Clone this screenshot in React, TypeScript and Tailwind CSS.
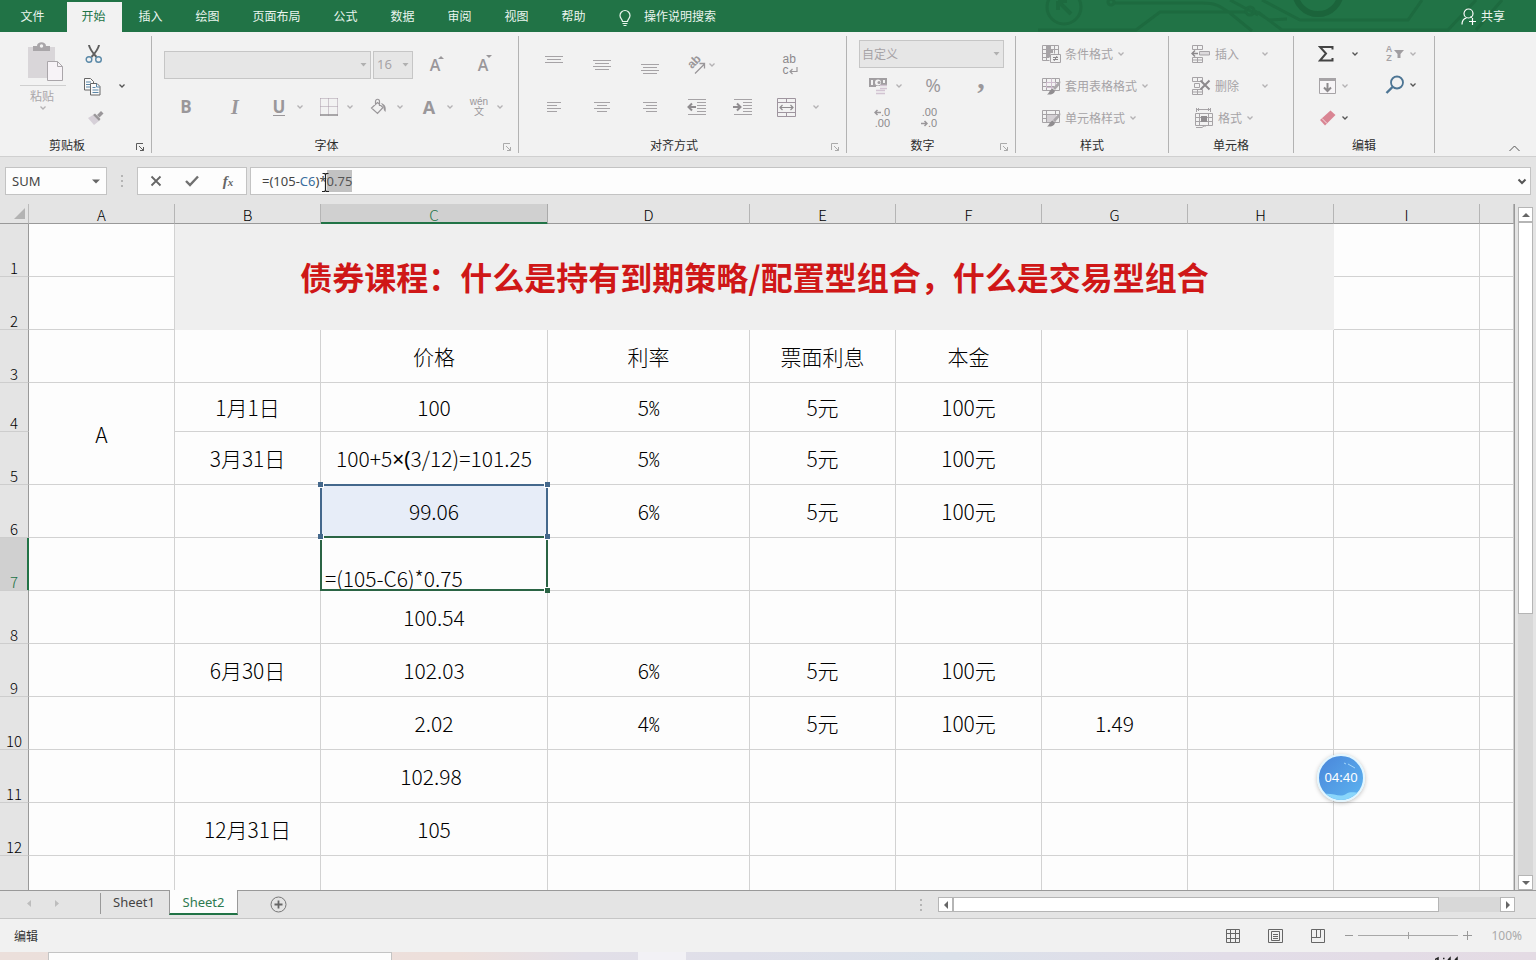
import React from "react";

const GRAY = "#a6a3a6";

/* ---------- small shared pieces ---------- */

function Svg({ w, h, children, className = "" }: { w: number; h: number; children: React.ReactNode; className?: string }) {
  return (
    <svg width={w} height={h} viewBox={`0 0 ${w} ${h}`} fill="none" className={`shrink-0 ${className}`} aria-hidden="true">
      {children}
    </svg>
  );
}

function Caret({ color = "#b4b2b4" }: { color?: string }) {
  return (
    <Svg w={8} h={6}>
      <path d="M1.5 1.5 4 4 6.5 1.5" stroke={color} strokeWidth="1.3" />
    </Svg>
  );
}

function IconButton({ label, className = "w-12", children }: { label: string; className?: string; children: React.ReactNode }) {
  return (
    <button type="button" aria-label={label} className={`flex h-7 shrink-0 items-center justify-center ${className}`}>
      {children}
    </button>
  );
}

function MenuButton({ label, color, className = "w-3" }: { label: string; color?: string; className?: string }) {
  return (
    <button type="button" aria-label={label} className={`flex h-7 shrink-0 items-center justify-center ${className}`}>
      <Caret color={color} />
    </button>
  );
}

function SplitButton({ label, children }: { label: string; children: React.ReactNode }) {
  return (
    <div className="flex w-[50px] shrink-0 items-center">
      <IconButton label={label} className="w-[30px]">
        {children}
      </IconButton>
      <MenuButton label={`${label}选项`} />
    </div>
  );
}

function Launcher({ label, dark }: { label: string; dark?: boolean }) {
  return (
    <button type="button" aria-label={label} className="mr-[5px] flex h-4 w-3 items-center justify-center self-end">
      <Svg w={10} h={10} className="mt-1">
        <path d="M1.5 8V1.5H8M4 4l4.5 4.5M8.5 5v3.5H5" stroke={dark ? "#5a5a5a" : "#aaa"} />
      </Svg>
    </button>
  );
}

function Group({ title, width, launcher, dark, children }: { title: string; width: string; launcher?: boolean; dark?: boolean; children: React.ReactNode }) {
  return (
    <section aria-label={title} className={`flex shrink-0 flex-col border-r border-[#b3b3b3] ${width}`}>
      <div className="flex-1">{children}</div>
      <div className="flex h-4 items-center">
        <h2 className="flex-1 text-center text-xs leading-4 text-[#2d2d2d]">{title}</h2>
        {launcher && <Launcher label={`${title}设置`} dark={dark} />}
      </div>
    </section>
  );
}

function Lines({ rows, w = 18, h = 18 }: { rows: [number, number, number][]; w?: number; h?: number }) {
  return (
    <Svg w={w} h={h}>
      {rows.map(([x1, x2, y], i) => (
        <path key={i} d={`M${x1} ${y + 0.5}H${x2}`} stroke={GRAY} />
      ))}
    </Svg>
  );
}

/* ---------- title tabs ---------- */

const tabs: [string, string][] = [
  ["插入", "w-[57px]"],
  ["绘图", "w-[57px]"],
  ["页面布局", "w-[81px]"],
  ["公式", "w-[57px]"],
  ["数据", "w-[57px]"],
  ["审阅", "w-[57px]"],
  ["视图", "w-[57px]"],
  ["帮助", "w-[57px]"],
];

function TabBar() {
  return (
    <header className="relative flex h-8 items-stretch overflow-hidden bg-[#217346] text-xs text-[#eaf5ee]">
      <svg className="absolute right-0 top-0" width="500" height="32" viewBox="0 0 500 32" fill="none" aria-hidden="true">
        <g stroke="#1d6a3f" strokeWidth="3">
          <circle cx="28" cy="7" r="17" />
          <path d="M22 1h9M22 1v9M22 1l13 13" strokeWidth="4" />
          <path d="M2 30h98l24-18h86M78 3h88c14 0 18 3 28 10l22 18M194 0l28 15M219 11l14 9h0l18-1M222 12l24 18M226 0l38 20h108l14-20M244 30h168l28-30M440 30l26-30" />
          <circle cx="214" cy="11" r="4" />
          <circle cx="75" cy="2" r="3" />
        </g>
        <circle cx="282" cy="-9" r="23" stroke="#1b643b" strokeWidth="6" />
      </svg>
      <nav aria-label="功能区" className="flex">
        <button type="button" className="w-[67px] pr-0.5">文件</button>
        <button type="button" aria-current="page" className="mt-0.5 w-[55px] bg-[#f2f2f2] pb-0.5 pr-0.5 text-[#217346]">开始</button>
        {tabs.map(([t, w]) => (
          <button type="button" key={t} className={w}>{t}</button>
        ))}
      </nav>
      <button type="button" className="ml-4 flex items-center gap-3">
        <Svg w={14} h={18} className="mt-1">
          <path d="M4.5 12.5c0-2-2.500-3-2.500-6a5 5 0 0 1 10 0c0 3-2.500 4-2.500 6zM4.500 14.500h5M5.500 16.500h3" stroke="#eaf5ee" strokeWidth="1.2" />
        </Svg>
        操作说明搜索
      </button>
      <button type="button" className="relative ml-auto mr-[31px] flex items-center gap-1">
        <Svg w={16} h={18} className="mt-0.5">
          <path d="M1 16.500c0-4 2-6 4.500-6.500M11 9.500c0 0-.5-.6-1.500-1" stroke="#fff" strokeWidth="1.2" />
          <circle cx="7.500" cy="5.500" r="4.500" stroke="#fff" strokeWidth="1.2" />
          <path d="M11.500 10v7M8 13.500h7" stroke="#fff" strokeWidth="1.2" />
        </Svg>
        共享
      </button>
    </header>
  );
}

/* ---------- ribbon ---------- */

function TableIcon({ kind }: { kind: "cond" | "table" | "style" }) {
  return (
    <Svg w={20} h={20}>
      {kind === "cond" ? (
        <>
          <path d="M1.500 1.500h16v9M1.500 1.500v15h7M1.500 5.500h16M1.500 9.500h8M1.500 13.500h7M5.500 1.500v15M13.500 1.500v8" stroke={GRAY} />
          <path d="M6 2h4v3H6zM6 6h6v3H6zM6 10h3v3H6z" fill={GRAY} />
          <path d="M9.500 10.500h10v8h-10z" fill="#f2f2f2" stroke={GRAY} />
          <path d="M12 13.500h5M12 15.500h5M16 12l-3 5" stroke="#8c898c" />
        </>
      ) : (
        <>
          <path d="M1.500 2.500h17v12h-17zM1.500 6.500h17M1.500 10.500h12M5.500 2.500v12M14.500 2.500v4" stroke={GRAY} />
          {kind === "table" ? <path d="M10.500 2.500v12M5.500 6.500h9v5h-9z" stroke="#cdbccd" /> : <path d="M6 7h9v7H6z" fill="#d4d0d4" />}
          <path d="M19 5c1 1 0 3-1 4.500l-4 4.500-2-2 4-4.500z" fill="#aaa7aa" />
          <path d="m11.500 12.500 2.500 2.500c-1 3-4 4-8 3.500 2-1 2-4 5.500-6z" fill="#908d90" />
        </>
      )}
    </Svg>
  );
}

function CellIcon({ kind }: { kind: "insert" | "delete" | "format" }) {
  if (kind === "format")
    return (
      <Svg w={20} h={20}>
        <path d="M2.500 0v4M16.500 0v4M3 1.500h13M5 0 3.500 1.500 5 3M14 0l1.500 1.500L14 3M1.500 5.500h17v12h-17zM1.500 9.500h17M1.500 13.500h17M5.500 5.500v12M14.500 5.500v12M2 19.500h6l2-1.500 2 0" stroke={GRAY} />
        <path d="M7 8h6v6H7z" fill="#908d90" />
      </Svg>
    );
  return (
    <Svg w={20} h={20}>
      <path d="M1.500 1.500h10v4h-10zM6.500 1.500v4M1.500 13.500h10v5h-10zM6.500 13.500v5M1.500 16h10" stroke={GRAY} />
      {kind === "insert" ? (
        <>
          <path d="M8.500 7.500h10v3.500h-10z" fill="#dcdadc" stroke={GRAY} />
          <path d="M1 9.500h6M4 6.500l-3 3 3 3" stroke="#8c898c" strokeWidth="1.500" />
        </>
      ) : (
        <>
          <path d="M3.500 7.500h5v4h-5z" stroke={GRAY} />
          <path d="m9.500 4.500 9 9M18.500 4.500l-9 9" stroke="#8c898c" strokeWidth="2" />
        </>
      )}
    </Svg>
  );
}

function Ribbon() {
  return (
    <div className="flex min-h-[125px] border-b border-[#d0d0d0] bg-[#f2f2f2] pb-[3px] pt-1 text-xs text-[#a6a3a6]">
      <Group title="剪贴板" width="w-[152px]" launcher dark>
        <div className="flex pt-1.5">
          <button type="button" className="ml-5 flex w-[46px] flex-col items-center self-start text-[#aaa7aa]">
            <Svg w={36} h={40} className="ml-1">
              <path d="M1 5h27v31H1z" fill="#d9d6d9" />
              <path d="M6 4h4c0-5 9-5 9 0h4v5H6z" fill="#a9a6a9" />
              <circle cx="14.500" cy="4" r="1.700" fill="#f2f2f2" />
              <path d="M20.500 19.500h10l5 5v14h-15z" fill="#f7f3f7" stroke="#aaa6aa" />
              <path d="M30.500 19.500v5h5" stroke="#aaa6aa" />
            </Svg>
            <span className="mt-[3px] w-full border-t border-[#cfcfcf] pr-0.5 leading-[19px]">粘贴</span>
            <Caret />
          </button>
          <div className="-mt-0.5 ml-2 flex flex-col">
            <IconButton label="剪切" className="mb-1 w-10">
              <Svg w={18} h={20}>
                <path d="M4 1c.5 4 3 7 7.500 12M14 1c-.5 4-3 7-7.500 12" stroke="#5f5f5f" strokeWidth="2" />
                <circle cx="4" cy="15.500" r="2.800" stroke="#5a89a8" strokeWidth="1.400" />
                <circle cx="13.500" cy="15.500" r="2.800" stroke="#5a89a8" strokeWidth="1.400" />
              </Svg>
            </IconButton>
            <div className="flex">
              <IconButton label="复制" className="mb-1 w-9">
                <Svg w={18} h={19}>
                  <path d="M1.500 1.500h6l3 3v8.500h-9z" fill="#fafafa" stroke="#666" />
                  <path d="M3 5h5M3 7.500h5M3 10h5" stroke="#5b87a8" />
                  <path d="M7.500 6.500h6.500l3 3v8.500H7.500z" fill="#fafafa" stroke="#666" />
                  <path d="M13.500 6.500v3.500H17M9.500 10.500h3M9.500 13h6M9.500 15.500h6" stroke="#5b87a8" />
                </Svg>
              </IconButton>
              <MenuButton label="复制选项" color="#555" className="ml-1.5 w-3" />
            </div>
            <IconButton label="格式刷" className="w-[42px]">
              <Svg w={18} h={16}>
                <path d="m2 8 5-3 6 6-5 4z" fill="#d6d0d8" />
                <path d="m7 5 2-1.500 5.500 5.500L13 11z" fill="#9a979a" />
                <path d="m11 5 4-4 2.500 2.500-4 4z" fill="#9a979a" />
              </Svg>
            </IconButton>
          </div>
        </div>
      </Group>

      <Group title="字体" width="w-[367px]" launcher>
        <div className="pt-2">
          <div className="flex h-[42px] items-center pl-3">
            <span className="relative w-[207px]">
              <select aria-label="字体名称" className="h-7 w-full appearance-none border border-[#c6c6c6] bg-[#e6e6e6] px-1">
                <option></option>
              </select>
              <Triangle />
            </span>
            <span className="relative ml-0.5 w-10">
              <select aria-label="字号" defaultValue="16" className="h-7 w-full appearance-none border border-[#c6c6c6] bg-[#e6e6e6] px-[3px] font-['Noto_Sans'] text-[13px]">
                <option>16</option>
              </select>
              <Triangle />
            </span>
            <IconButton label="增大字号">
              <span className="font-['Open_Sans'] text-base font-semibold text-[#9a979a]">A</span>
              <Svg w={6} h={4} className="-ml-0.5 mb-4"><path d="M0 4l3-3 3 3z" fill="#9a979a" /></Svg>
            </IconButton>
            <IconButton label="减小字号">
              <span className="font-['Open_Sans'] text-base font-semibold text-[#9a979a]">A</span>
              <Svg w={6} h={4} className="-ml-0.5 mb-4"><path d="M0 0l3 3 3-3z" fill="#9a979a" /></Svg>
            </IconButton>
          </div>
          <div className="flex h-[42px] items-center pl-2.5 font-['Open_Sans'] text-[17px] text-[#9a979a]">
            <IconButton label="加粗"><b>B</b></IconButton>
            <IconButton label="倾斜" className="w-[50px]"><b className="font-['Liberation_Serif'] text-xl italic">I</b></IconButton>
            <span className="w-1" />
            <SplitButton label="下划线"><b className="border-b border-[#9a979a] leading-4">U</b></SplitButton>
            <SplitButton label="边框">
              <Svg w={18} h={18}>
                <path d="M0.500 0.500h17M0.500 0.500v17M17.500 0.500v17M0.500 8.500h17M8.500 0.500v17" stroke="#a89ba8" strokeDasharray="1 1" />
                <path d="M0 17h18" stroke="#8f8c8f" strokeWidth="1.500" />
              </Svg>
            </SplitButton>
            <SplitButton label="填充颜色">
              <Svg w={18} h={18}>
                <path d="M7.500 4.500 13 9.500 7.500 15.500 1.500 10zM5.500 7V3.500c0-3 4-3 4 0V8" stroke="#9a979a" strokeWidth="1.200" />
                <path d="M11 5c4 1 5.500 4 4.500 9-1.500-1-2-3-2-5z" fill="#9a979a" />
              </Svg>
            </SplitButton>
            <SplitButton label="字体颜色"><b className="text-lg">A</b></SplitButton>
            <SplitButton label="拼音">
              <span className="flex flex-col items-center font-['Liberation_Sans','Noto_Sans_CJK_SC',sans-serif] text-[10px] leading-[10px]">
                <span>wén</span>
                <span>文</span>
              </span>
            </SplitButton>
          </div>
        </div>
      </Group>

      <Group title="对齐方式" width="w-[328px]" launcher>
        <div className="pt-2">
          <div className="flex h-[42px] items-center pl-[11px]">
            <IconButton label="顶端对齐"><Lines rows={[[0, 18, 0], [2, 16, 3], [0, 18, 6]]} /></IconButton>
            <IconButton label="垂直居中"><Lines rows={[[0, 18, 4], [2, 16, 7], [0, 18, 10], [2, 16, 13]]} /></IconButton>
            <IconButton label="底端对齐"><Lines rows={[[0, 18, 8], [2, 16, 11], [0, 18, 14], [2, 16, 17]]} /></IconButton>
            <div className="flex w-[103px] items-center pl-2">
              <IconButton label="方向" className="w-7">
                <Svg w={24} h={24}>
                  <text x="4" y="13" transform="rotate(-45 10 10)" fill="#9a979a" className="font-['Liberation_Sans'] text-xs font-bold">ab</text>
                  <path d="m11 20.500 9-9M15.500 10.500h5v5" stroke="#9a979a" strokeWidth="1.300" />
                </Svg>
              </IconButton>
              <MenuButton label="方向选项" className="-ml-1 w-3" />
            </div>
            <IconButton label="自动换行" className="w-[26px]">
              <span className="flex flex-col items-start font-['Liberation_Sans'] text-xs leading-[11px] text-[#8c898c]">
                <span>ab</span>
                <span className="flex items-center">c
                  <Svg w={9} h={8}><path d="M8 0v4.500H1M3.500 2 1 4.500 3.500 7" stroke="#9a979a" strokeWidth="1.200" /></Svg>
                </span>
              </span>
            </IconButton>
          </div>
          <div className="flex h-[42px] items-center pl-[11px]">
            <IconButton label="左对齐"><Lines rows={[[2, 16, 4], [2, 12, 7], [2, 16, 10], [2, 12, 13]]} /></IconButton>
            <IconButton label="居中"><Lines rows={[[1, 17, 4], [4, 14, 7], [1, 17, 10], [4, 14, 13]]} /></IconButton>
            <IconButton label="右对齐"><Lines rows={[[2, 16, 4], [5, 16, 7], [2, 16, 10], [5, 16, 13]]} /></IconButton>
            {["减少缩进量", "增加缩进量"].map((t, i) => (
              <IconButton label={t} key={t} className="w-[46px]">
                <Svg w={20} h={18}>
                  <path d="M1 1.500h18M10 4.500h9M10 7.500h9M10 10.500h9M10 13.500h9M1 16.500h18" stroke={GRAY} />
                  <path d={i ? "M0 9h7M4 5.500 7.500 9 4 12.500" : "M2 9h7M5 5.500 1.500 9 5 12.500"} stroke="#8f8c8f" strokeWidth="2" />
                </Svg>
              </IconButton>
            ))}
            <IconButton label="合并后居中" className="w-10">
              <Svg w={19} h={19}>
                <path d="M.5.500h18v18H.5zM.5 4.500h18M.5 14.500h18M9.500.500v4M9.500 14.500v4" stroke="#9f959f" />
                <path d="M3 9.500h13M5.500 7 3 9.500 5.500 12M13.500 7l2.500 2.500-2.500 2.500" stroke="#8f8c8f" strokeWidth="1.200" />
              </Svg>
            </IconButton>
            <MenuButton label="合并选项" className="ml-1 w-3" />
          </div>
        </div>
      </Group>

      <Group title="数字" width="w-[169px]" launcher>
        <div className="pl-3 pr-[11px] pt-1">
          <span className="relative block">
            <select aria-label="数字格式" className="h-7 w-full appearance-none border border-[#c6c6c6] bg-[#e6e6e6] px-0.5">
              <option>自定义</option>
            </select>
            <Triangle />
          </span>
          <div className="flex h-9 items-center pl-1">
            <IconButton label="会计数字格式" className="w-[30px]">
              <Svg w={20} h={20}>
                <path d="M1 2h18v9H1z" fill="#a19ea1" />
                <path d="M3 4h2v5H3zM15 4h2v3h-2z" fill="#f2f2f2" />
                <circle cx="10" cy="6.500" r="3" fill="#f2f2f2" />
                <circle cx="11" cy="6.500" r="1.500" fill="#a19ea1" />
                <path d="M8 10h11v9H8z" fill="#f2f2f2" />
                <path d="M12 9.500h7M12 12.500h7M8 14.500h9M8 17.500h9" stroke="#d2c4d2" strokeWidth="1.500" />
              </Svg>
            </IconButton>
            <MenuButton label="会计格式选项" />
            <IconButton label="百分比样式" className="ml-1 w-12"><span className="font-['Open_Sans'] text-[19px] text-[#9a979a]">%</span></IconButton>
            <IconButton label="千位分隔样式"><span className="-mt-4 font-['Liberation_Serif'] text-3xl font-bold leading-6 text-[#9a979a]">,</span></IconButton>
          </div>
          <div className="flex h-7 items-center font-['Liberation_Sans'] text-[11px] leading-[11px] text-[#8c898c]">
            <IconButton label="增加小数位数" className="w-[46px]">
              <span className="flex flex-col items-end">
                <span className="flex items-center"><SmallArrow left />.0</span>
                <span>.00</span>
              </span>
            </IconButton>
            <IconButton label="减少小数位数">
              <span className="flex flex-col items-end">
                <span>.00</span>
                <span className="flex items-center"><SmallArrow />.0</span>
              </span>
            </IconButton>
          </div>
        </div>
      </Group>

      <Group title="样式" width="w-[153px]">
        <div className="flex flex-col pl-[25px] pt-0.5">
          {([["条件格式", "cond"], ["套用表格格式", "table"], ["单元格样式", "style"]] as const).map(([t, k]) => (
            <button type="button" key={t} className="flex h-8 items-center gap-1">
              <TableIcon kind={k} />
              {t}
              <Caret />
            </button>
          ))}
        </div>
      </Group>

      <Group title="单元格" width="w-[125px]">
        <div className="flex flex-col pl-[22px] pt-0.5">
          {([["插入", "insert"], ["删除", "delete"]] as const).map(([t, k]) => (
            <div key={t} className="flex h-8 items-center">
              <button type="button" className="flex items-center gap-1"><CellIcon kind={k} />{t}</button>
              <MenuButton label={`${t}选项`} className="ml-5 w-3" />
            </div>
          ))}
          <button type="button" className="flex h-8 items-center gap-1 pl-[3px]"><CellIcon kind="format" />格式<Caret /></button>
        </div>
      </Group>

      <Group title="编辑" width="w-[141px]">
        <div className="flex justify-between pl-[19px] pr-[15px] pt-0.5">
          <div>
            <div className="flex h-8 items-center">
              <IconButton label="自动求和" className="w-[26px]">
                <Svg w={16} h={18}>
                  <path d="M14.500 4.500V2H2l6 6.500L2 15.500h12.500V13" stroke="#444" strokeWidth="2" />
                </Svg>
              </IconButton>
              <MenuButton label="求和选项" color="#555" className="ml-2.5 w-3" />
            </div>
            <div className="flex h-8 items-center">
              <IconButton label="填充" className="w-[30px]">
                <Svg w={18} h={18}>
                  <path d="M.5 1.500h16v15H.5z" fill="#f7f5f7" stroke="#a6a3a6" />
                  <path d="M0 1h17v3H0z" fill="#a6a3a6" />
                  <path d="M8.500 6v8M5 10.500l3.500 3.500 3.500-3.500" stroke="#8c898c" strokeWidth="2" />
                </Svg>
              </IconButton>
              <MenuButton label="填充选项" className="-ml-1 w-3" />
            </div>
            <div className="flex h-8 items-center">
              <IconButton label="清除" className="w-[30px]">
                <Svg w={18} h={18}>
                  <path d="m1 11 10.500-9.500 5 4.500L6 16.500z" fill="#d98593" />
                  <path d="m3 9.500 5 5" stroke="#f4dfe3" />
                </Svg>
              </IconButton>
              <MenuButton label="清除选项" color="#555" className="-ml-1 w-3" />
            </div>
          </div>
          <div>
            <div className="flex h-8 items-center">
              <IconButton label="排序和筛选" className="w-6">
                <span className="flex flex-col font-['Liberation_Sans'] text-[9px] font-bold leading-[9px]"><span>A</span><span>Z</span></span>
                <Svg w={10} h={10} className="ml-0.5"><path d="M0 1h10L6.500 5v4h-3V5z" fill="#a19ea1" /></Svg>
              </IconButton>
              <MenuButton label="排序选项" />
            </div>
            <div className="flex h-[30px] items-center">
              <IconButton label="查找和选择" className="w-6">
                <Svg w={20} h={20}>
                  <circle cx="12" cy="7.500" r="6" stroke="#4d7594" strokeWidth="1.800" />
                  <path d="m7.500 12-6 6" stroke="#4d7594" strokeWidth="2.400" />
                </Svg>
              </IconButton>
              <MenuButton label="查找选项" color="#555" />
            </div>
          </div>
        </div>
      </Group>

      <button type="button" aria-label="折叠功能区" className="ml-auto mr-[15px] self-end">
        <Svg w={13} h={9}><path d="m1.500 7 5-5 5 5" stroke="#555" /></Svg>
      </button>
    </div>
  );
}

function Triangle() {
  return (
    <svg width="7" height="4" viewBox="0 0 7 4" className="pointer-events-none absolute right-1 top-3" aria-hidden="true">
      <path d="M0.500 0h6l-3 3.500z" fill="#b0b0b0" />
    </svg>
  );
}

function SmallArrow({ left }: { left?: boolean }) {
  return (
    <Svg w={7} h={7}>
      <path d={left ? "M7 3.500H1M3.500 1 1 3.500 3.500 6" : "M0 3.500h6M3.500 1 6 3.500 3.500 6"} stroke="#9a979a" strokeWidth="1.500" />
    </Svg>
  );
}

/* ---------- formula bar ---------- */

function Dots({ className = "" }: { className?: string }) {
  return (
    <Svg w={2} h={12} className={className}>
      <path d="M0 0h2v2H0zM0 5h2v2H0zM0 10h2v2H0z" fill="#b5b5b5" />
    </Svg>
  );
}

function FormulaBar() {
  return (
    <div className="flex items-center bg-[#e4e4e4] px-[5px] pb-[9px] pt-2.5 font-['Noto_Sans'] text-[13px] text-[#444]">
      <div className="flex h-7 w-[102px] border border-[#c3c3c3] bg-[#fdfdfd]">
        <input aria-label="名称框" defaultValue="SUM" className="w-20 bg-transparent pl-1.5 pt-0.5 outline-none" />
        <button type="button" aria-label="名称列表" className="flex flex-1 items-center justify-center">
          <Svg w={8} h={5}><path d="M0 .5h8l-4 4z" fill="#666" /></Svg>
        </button>
      </div>
      <Dots className="ml-3.5 mr-3.5" />
      <div className="flex h-7 w-[110px] items-center border border-[#c3c3c3] bg-[#fdfdfd]">
        <IconButton label="取消" className="w-9"><Svg w={12} h={12}><path d="m1.500 1.500 9 9M10.500 1.500l-9 9" stroke="#666" strokeWidth="1.800" /></Svg></IconButton>
        <IconButton label="输入" className="w-9"><Svg w={14} h={12}><path d="m1 6 4 4 8-8.500" stroke="#707070" strokeWidth="2.400" /></Svg></IconButton>
        <IconButton label="插入函数" className="w-9"><span className="font-['Liberation_Serif'] text-[15px] font-bold italic text-[#666]">f<span className="text-[11px]">x</span></span></IconButton>
      </div>
      <div className="relative ml-[3px] flex h-7 flex-1 items-center border border-[#c3c3c3] bg-[#fdfdfd]">
        <div role="textbox" aria-label="编辑栏" contentEditable suppressContentEditableWarning className="flex-1 whitespace-pre pl-[11px] leading-[22px] outline-none">
          =(105-<span className="text-[#3a6f9f]">C6</span>)*<mark className="inline-block bg-[#c2c2c2] text-[#555]">0.75</mark>
        </div>
        <svg className="pointer-events-none absolute left-[70px] top-[5px]" width="9" height="19" viewBox="0 0 9 19" fill="none" aria-hidden="true">
          <path d="M1 18.500h2.500l1-1 1 1H8M1.500.500h2l1 1 1-1h2M4.500 1.500v16" stroke="#222" strokeWidth="1.200" />
        </svg>
        <button type="button" aria-label="展开编辑栏" className="flex w-4 items-center justify-center">
          <Svg w={10} h={7}><path d="m1.500 1.500 3.500 3.500 3.500-3.500" stroke="#555" strokeWidth="2" /></Svg>
        </button>
      </div>
    </div>
  );
}

/* ---------- worksheet ---------- */

const columns = ["A", "B", "C", "D", "E", "F", "G", "H", "I", ""];

const Pct = ({ n }: { n: number }) => (
  <>{n}<span className="[font-feature-settings:'hwid']">%</span></>
);

type Row = { n: number; cells: React.ReactNode[] };

const rows: Row[] = [
  { n: 3, cells: ["", "价格", "利率", "票面利息", "本金", ""] },
  { n: 4, cells: ["1月1日", "100", <Pct n={5} />, "5元", "100元", ""] },
  { n: 5, cells: ["3月31日", <>100+5<span className="font-['Noto_Sans'] font-normal">×(</span>3/12)=101.25</>, <Pct n={5} />, "5元", "100元", ""] },
  { n: 6, cells: ["", "99.06", <Pct n={6} />, "5元", "100元", ""] },
  { n: 7, cells: ["", "=(105-C6)*0.75", "", "", "", ""] },
  { n: 8, cells: ["", "100.54", "", "", "", ""] },
  { n: 9, cells: ["6月30日", "102.03", <Pct n={6} />, "5元", "100元", ""] },
  { n: 10, cells: ["", "2.02", <Pct n={4} />, "5元", "100元", "1.49"] },
  { n: 11, cells: ["", <span className="mr-1.5">102.98</span>, "", "", "", ""] },
  { n: 12, cells: ["12月31日", "105", "", "", "", ""] },
];

const cell = "border-b border-r border-[#d2d2d2] p-0";
const rowHead = "border-b border-r border-b-[#cdcdcd] p-0 text-center align-bottom text-[15px] font-light leading-4";

function Sheet() {
  return (
    <table className="w-full table-fixed border-separate border-spacing-0 bg-[#fdfdfd] text-center font-['Noto_Sans_CJK_SC_Light','Noto_Sans_CJK_SC',sans-serif] text-[21px] font-light leading-[30px] text-black">
      <colgroup>
        <col className="w-[29px]" />
        <col className="w-[146px]" />
        <col className="w-[146px]" />
        <col className="w-[227px]" />
        <col className="w-[202px]" />
        <col className="w-[146px]" />
        <col className="w-[146px]" />
        <col className="w-[146px]" />
        <col className="w-[146px]" />
        <col className="w-[146px]" />
        <col />
      </colgroup>
      <thead>
        <tr className="h-5 bg-[#e4e4e4] text-[15px] leading-4">
          <th className="border-b border-r border-b-[#999] border-r-[#bbb] p-0">
            <Svg w={12} h={12} className="ml-3.5"><path d="M11 0v11H0z" fill="#b3b3b3" /></Svg>
          </th>
          {columns.map((c) => (
            <th
              key={c}
              className={
                c === "C"
                  ? "border-b border-r border-b-[#217346] border-r-[#aaa] bg-[#d0d0d0] p-0 align-bottom font-light text-[#217346] shadow-[inset_0_-1px_0_#217346]"
                  : "border-b border-r border-b-[#999] border-r-[#b5b5b5] p-0 align-bottom font-light text-black"
              }
            >
              {c}
            </th>
          ))}
        </tr>
      </thead>
      <tbody>
        <tr className="h-[53px]">
          <th className={`border-r-[#999] bg-[#e4e4e4] ${rowHead}`}>1</th>
          <td className={cell} />
          <td colSpan={7} rowSpan={2} className="bg-[#efefef] p-0 pb-0.5 font-['Noto_Sans_CJK_SC',sans-serif] text-[32px] font-bold leading-10 text-[#cf1717]">
            债券课程：什么是持有到期策略/配置型组合，什么是交易型组合
          </td>
          <td className={cell} />
          <td className={cell} />
        </tr>
        <tr className="h-[53px]">
          <th className={`border-r-[#999] bg-[#e4e4e4] ${rowHead}`}>2</th>
          <td className={cell} />
          <td className={cell} />
          <td className={cell} />
        </tr>
        {rows.map(({ n, cells }) => (
          <tr key={n} className={n === 4 ? "h-[49px]" : "h-[53px]"}>
            <th
              className={
                n === 7
                  ? `border-r-[#217346] bg-[#d0d0d0] text-[#217346] shadow-[inset_-1px_0_0_#217346] ${rowHead}`
                  : `border-r-[#999] bg-[#e4e4e4] ${rowHead}`
              }
            >
              {n}
            </th>
            {n === 4 && <td rowSpan={2} className={cell}>A</td>}
            {n !== 4 && n !== 5 && <td className={cell} />}
            {cells.map((v, i) => {
              if (i === 1 && n === 6)
                return (
                  <td key={i} className={`relative bg-[#e7edf8] ${cell}`}>
                    {v}
                    <span className="absolute -inset-x-px -top-px bottom-0 border-x-2 border-t-2 border-[#44688c]" />
                    <span className="absolute -left-[3px] -top-[3px] size-1.5 border-b border-r border-white bg-[#44688c]" />
                    <span className="absolute -right-[3px] -top-[3px] size-1.5 border-b border-l border-white bg-[#44688c]" />
                  </td>
                );
              if (i === 1 && n === 7)
                return (
                  <td key={i} className={`relative text-left align-bottom leading-6 ${cell}`}>
                    <span className="pl-1">{v}</span>
                    <span className="absolute -inset-x-px -bottom-px -top-0.5 border-2 border-[#2a6444]" />
                    <span className="absolute -left-[3px] -top-1 size-1.5 border-b border-r border-white bg-[#44688c]" />
                    <span className="absolute -right-[3px] -top-1 size-1.5 border-b border-l border-white bg-[#44688c]" />
                    <span className="absolute -bottom-[3px] -right-[3px] size-1.5 border-l border-t border-white bg-[#2a6444]" />
                  </td>
                );
              return <td key={i} className={cell}>{v}</td>;
            })}
            <td className={cell} />
            <td className={cell} />
            <td className={cell} />
          </tr>
        ))}
        <tr className="h-[34px]">
          <th className="border-r border-[#999] bg-[#e4e4e4] p-0" />
          {columns.map((c) => (
            <td key={c} className="border-r border-[#d2d2d2] p-0" />
          ))}
        </tr>
      </tbody>
    </table>
  );
}

function ScrollArrow({ dir }: { dir: "up" | "down" | "left" | "right" }) {
  const d = { up: "M0 6h8L4 2z", down: "M0 2h8L4 6z", left: "M6 0v8L2 4z", right: "M2 0v8l4-4z" }[dir];
  return (
    <button type="button" aria-label={`滚动 ${dir}`} className="flex size-[15px] shrink-0 items-center justify-center border border-[#b5b5b5] bg-white">
      <Svg w={8} h={8}><path d={d} fill="#666" /></Svg>
    </button>
  );
}

function SheetTabs() {
  return (
    <div className="flex h-7 border-t border-[#999] bg-[#e4e4e4] font-['Noto_Sans'] text-[13px] text-[#444]">
      <div className="flex w-[100px] items-center gap-[22px] pb-0.5 pl-[26px]">
        <button type="button" aria-label="上一张工作表"><Svg w={6} h={7}><path d="M5 0v7L1 3.500z" fill="#bdbdbd" /></Svg></button>
        <button type="button" aria-label="下一张工作表"><Svg w={6} h={7}><path d="M1 0v7l4-3.500z" fill="#bdbdbd" /></Svg></button>
      </div>
      <button type="button" className="mb-1 mt-0.5 w-[69px] border-l border-[#999] pb-[3px] pr-0.5 leading-[18px]">Sheet1</button>
      <button type="button" aria-current="page" className="-mt-px mb-[3px] w-[69px] border-x border-b-2 border-x-[#999] border-b-[#217346] bg-[#fdfdfd] leading-[18px] text-[#2d7a50]">Sheet2</button>
      <button type="button" aria-label="新工作表" className="ml-8 self-center">
        <Svg w={17} h={17}><circle cx="8.500" cy="8.500" r="7.500" stroke="#777" /><path d="M8.500 4.500v8M4.500 8.500h8" stroke="#666" strokeWidth="1.800" /></Svg>
      </button>
      <Dots className="ml-auto mr-4 self-center" />
      <div className="mr-[21px] flex w-[577px] max-w-[50%] self-center bg-[#d8d8d8]">
        <ScrollArrow dir="left" />
        <div className="w-[486px] border border-[#b5b5b5] bg-white" />
        <div className="flex-1" />
        <ScrollArrow dir="right" />
      </div>
    </div>
  );
}

function StatusBar() {
  return (
    <footer className="flex h-[34px] items-center border-t border-[#c6c6c6] bg-[#f1f1f1] px-3.5 text-xs text-[#333]">
      <span>编辑</span>
      <div className="ml-auto flex items-center gap-7">
        <button type="button" aria-label="普通视图"><Svg w={14} h={14}><path d="M.5.500h13v13H.5zM.5 4.500h13M.5 9.500h13M4.500.500v13M9.500.500v13" stroke="#666" /></Svg></button>
        <button type="button" aria-label="页面布局视图"><Svg w={15} h={14}><path d="M.5.500h14v13H.5zM3.500 2.500h8v9h-8zM5 5.500h5M5 7.500h5M5 9.500h5" stroke="#666" /></Svg></button>
        <button type="button" aria-label="分页预览"><Svg w={14} h={14}><path d="M.5.500h13v13H.5zM.5 8.500h9v-8M5.500.500v8" stroke="#666" /></Svg></button>
      </div>
      <button type="button" aria-label="缩小" className="ml-5"><Svg w={8} h={9}><path d="M0 4.500h8" stroke="#999" /></Svg></button>
      <input
        type="range"
        aria-label="显示比例"
        className="mx-[5px] h-px w-[100px] appearance-none bg-[#a8a8a8] [&::-webkit-slider-thumb]:h-[7px] [&::-webkit-slider-thumb]:w-px [&::-webkit-slider-thumb]:appearance-none [&::-webkit-slider-thumb]:bg-[#a0a0a0]"
      />
      <button type="button" aria-label="放大"><Svg w={9} h={9}><path d="M0 4.500h9M4.500 0v9" stroke="#999" /></Svg></button>
      <span className="ml-[19px] font-['Noto_Sans'] text-xs text-[#aaa]">100%</span>
    </footer>
  );
}

export default function App() {
  return (
    <div className="flex min-h-screen flex-col bg-[#e4e4e4] font-['Noto_Sans_CJK_SC',sans-serif]">
      <TabBar />
      <Ribbon />
      <FormulaBar />
      <main className="relative flex flex-1">
        <div className="min-w-0 flex-1 border-r border-[#999]">
          <Sheet />
        </div>
        <div className="mx-[3px] mt-[3px] flex w-[15px] flex-col bg-[#d8d8d8]">
          <ScrollArrow dir="up" />
          <div className="h-[392px] border border-[#b5b5b5] bg-white" />
          <div className="flex-1" />
          <ScrollArrow dir="down" />
        </div>
        <div className="absolute right-[171px] top-[550px] flex size-12 items-center justify-center overflow-hidden rounded-full border-2 border-[#e2f6ff] bg-linear-to-br from-[#4a86da] to-[#5db4f0] font-['Noto_Sans'] text-[13px] text-white shadow-[0_1px_4px_rgba(0,0,0,0.25)]">
          <svg className="absolute inset-0" width="44" height="44" viewBox="0 0 44 44" fill="none" aria-hidden="true">
            <path d="M5 38c10-1 16 4 22 0 5-3 9-1 14-1l-8 7H10z" fill="#8ad6fb" />
            <path d="M29 8l7 4M25 7l2 1" stroke="#a5d8fb" />
          </svg>
          <span className="relative">04:40</span>
        </div>
      </main>
      <SheetTabs />
      <StatusBar />
      <div className="flex h-2 bg-[linear-gradient(90deg,#ebdfdb_0%,#eddfdb_30%,#e2dfe8_38%,#dfdfe9_48%,#dbe1ea_62%,#e2dde8_80%,#e4dbe4_100%)]">
        <div className="ml-12 w-[344px] border-x border-t border-[#c4c4c4] bg-[#fdfdfd]" />
        <div className="ml-[246px] w-12 bg-[#f2f1f5]" />
        <Svg w={24} h={8} className="ml-auto mr-[77px]">
          <path d="M0 7.500 3 6v2M8 6.500h1.500M13 8l2-2v2M20 8l2-2v2" stroke="#222" strokeWidth="1.500" />
        </Svg>
      </div>
    </div>
  );
}
